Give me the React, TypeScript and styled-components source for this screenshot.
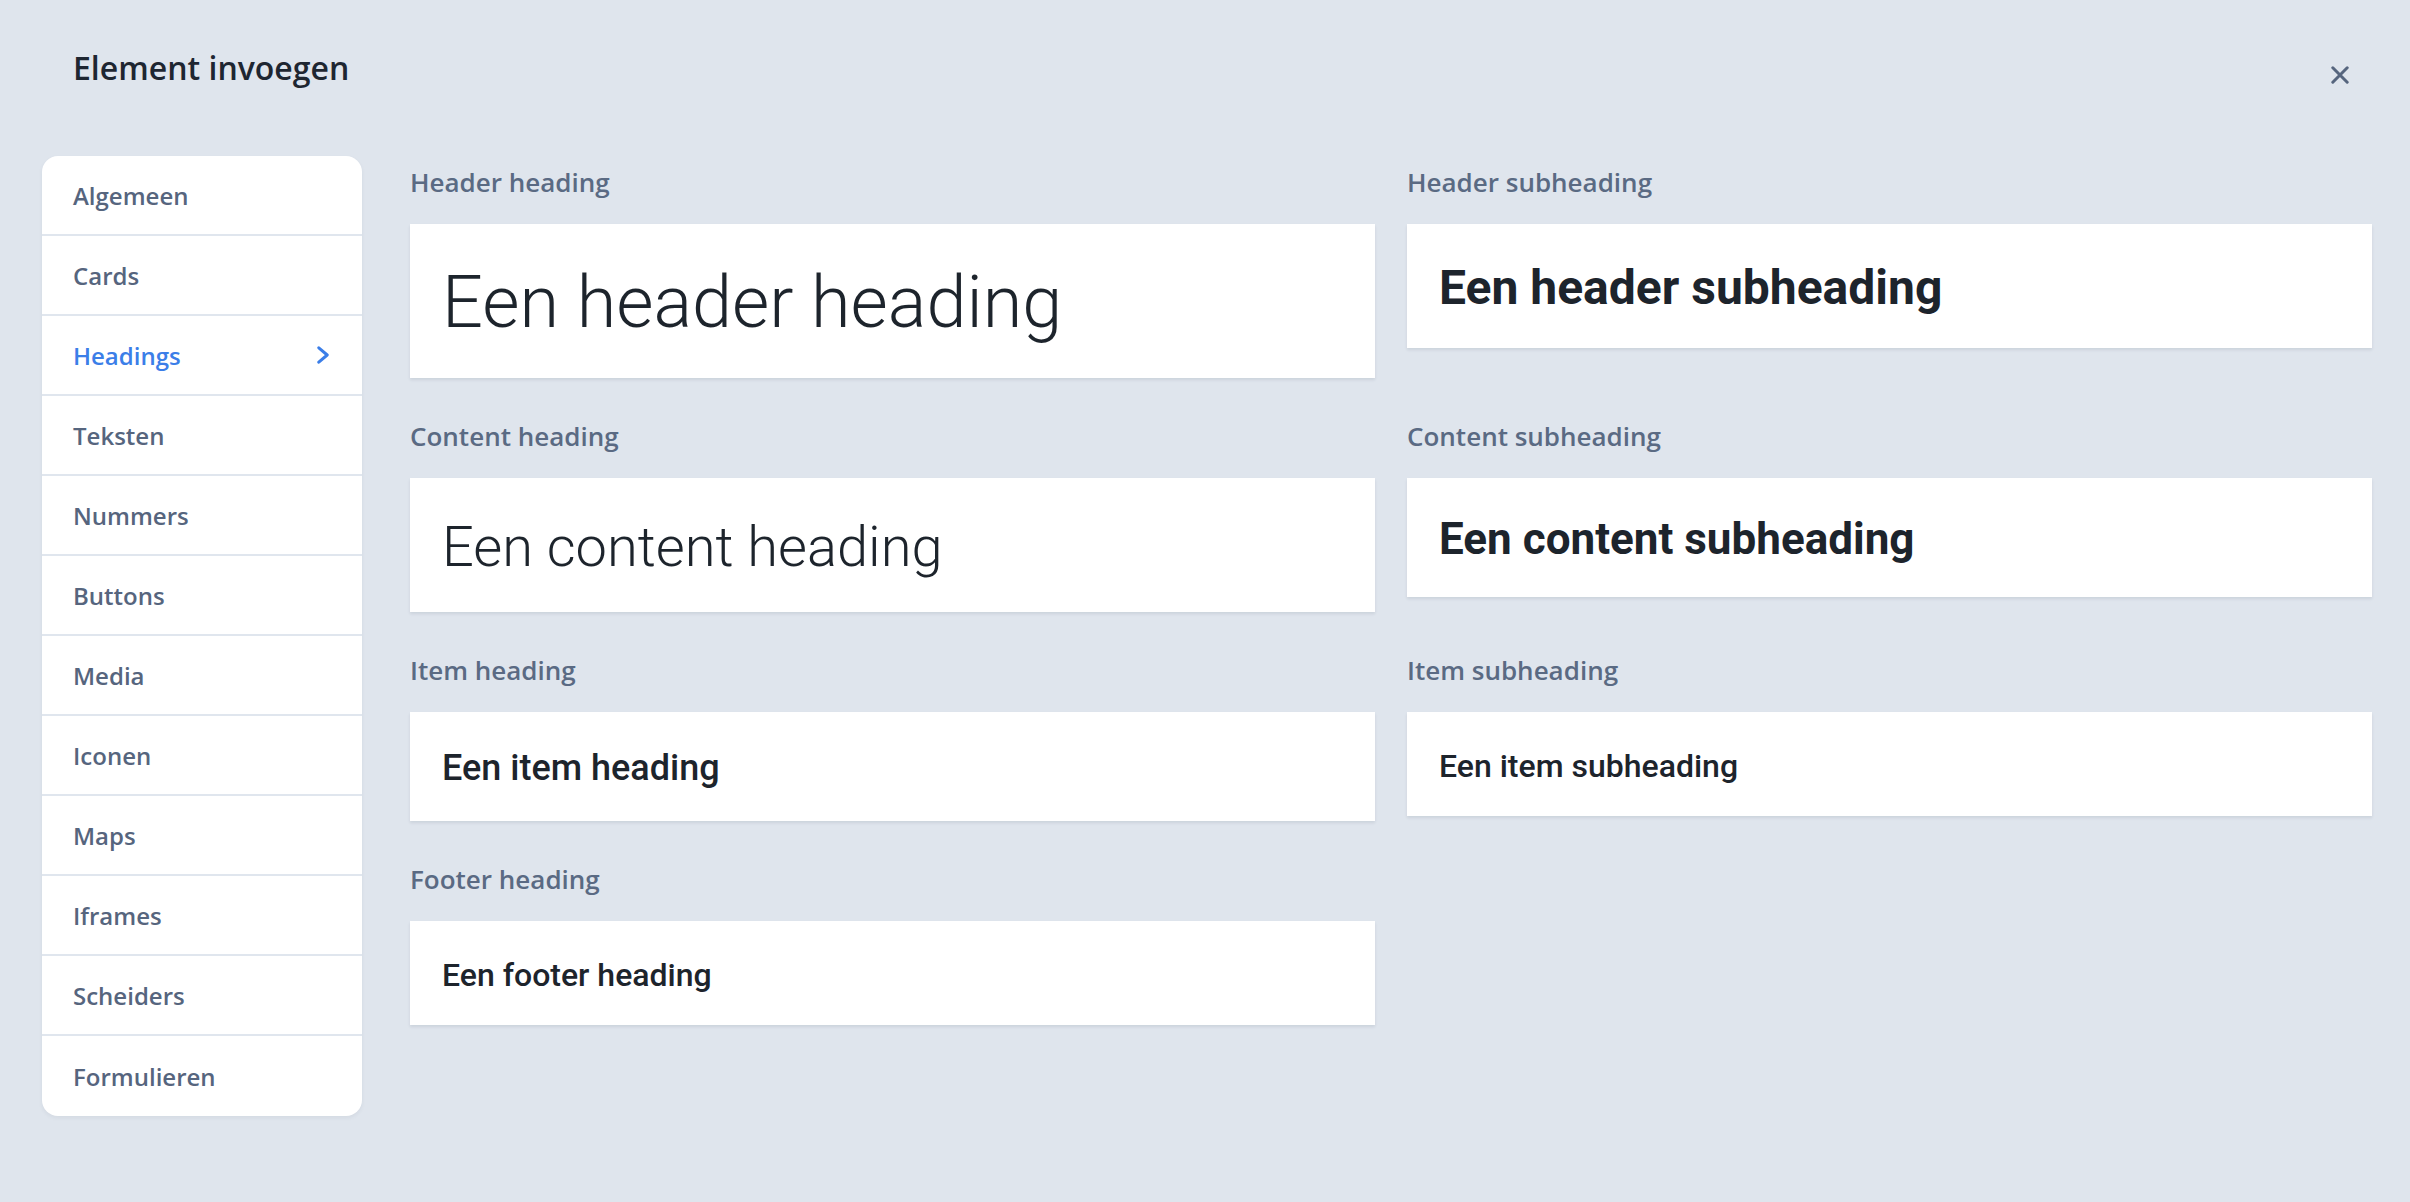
import React from "react";
import styled, { createGlobalStyle } from "styled-components";

const GlobalStyle = createGlobalStyle`
  html, body {
    margin: 0;
    padding: 0;
    background: #dfe5ed;
  }
  * {
    box-sizing: border-box;
  }
`;

const categories = [
  "Algemeen",
  "Cards",
  "Headings",
  "Teksten",
  "Nummers",
  "Buttons",
  "Media",
  "Iconen",
  "Maps",
  "Iframes",
  "Scheiders",
  "Formulieren",
];

type Sample = {
  label: string;
  text: string;
  size: number;
  weight: number;
};

const samples: Sample[] = [
  { label: "Header heading", text: "Een header heading", size: 72, weight: 300 },
  { label: "Header subheading", text: "Een header subheading", size: 48, weight: 700 },
  { label: "Content heading", text: "Een content heading", size: 56, weight: 300 },
  { label: "Content subheading", text: "Een content subheading", size: 44, weight: 700 },
  { label: "Item heading", text: "Een item heading", size: 36, weight: 500 },
  { label: "Item subheading", text: "Een item subheading", size: 32, weight: 500 },
  { label: "Footer heading", text: "Een footer heading", size: 32, weight: 500 },
];

const Modal = styled.div`
  min-height: 100vh;
  background: #dfe5ed;
  font-family: "Open Sans", "Liberation Sans", sans-serif;
`;

const Header = styled.header`
  display: flex;
  align-items: center;
  justify-content: space-between;
  height: 92px;
  padding: 44px 61px 0 73px;
`;

const Title = styled.h1`
  margin: 0;
  font-size: 32px;
  line-height: 48px;
  font-weight: 600;
  color: #1e2631;
`;

const CloseButton = styled.button`
  display: flex;
  align-items: center;
  justify-content: center;
  width: 18px;
  height: 18px;
  margin-top: 14px;
  padding: 0;
  border: 0;
  background: none;
  color: #56657e;
  cursor: pointer;
`;

const Body = styled.div`
  display: grid;
  grid-template-columns: 320px 1fr;
  column-gap: 48px;
  align-items: start;
  padding: 64px 38px 80px 42px;
`;

const Sidebar = styled.nav`
  display: flex;
  flex-direction: column;
  background: #ffffff;
  border-radius: 16px;
  overflow: hidden;
  box-shadow: 0 2px 4px rgba(30, 45, 70, 0.06);
`;

const NavItem = styled.a<{ $active?: boolean }>`
  display: flex;
  align-items: center;
  justify-content: space-between;
  height: 80px;
  padding: 0 33px 0 31px;
  border-bottom: 2px solid #e0e6ee;
  font-size: 24px;
  font-weight: 600;
  color: ${(p) => (p.$active ? "#3b7ee8" : "#56657e")};
  text-decoration: none;
  cursor: pointer;

  &:last-child {
    border-bottom: 0;
  }
`;

const Samples = styled.div`
  display: grid;
  grid-template-columns: 1fr 1fr;
  column-gap: 32px;
  row-gap: 40px;
  align-items: start;
  padding-top: 8px;
`;

const Block = styled.section`
  display: flex;
  flex-direction: column;
`;

const Label = styled.div`
  margin-bottom: 24px;
  font-size: 26px;
  line-height: 36px;
  font-weight: 600;
  color: #5a6a83;
`;

const Card = styled.div`
  padding: 34px 32px 30px;
  background: #ffffff;
  box-shadow: 0 2px 3px rgba(30, 45, 70, 0.1);
`;

const SampleText = styled.div<{ $size: number; $weight: number }>`
  font-family: Roboto, "Liberation Sans", sans-serif;
  font-size: ${(p) => p.$size}px;
  line-height: 1.25;
  font-weight: ${(p) => p.$weight};
  color: #1d242c;
  white-space: nowrap;
`;

const CloseIcon = () => (
  <svg width="18" height="18" viewBox="0 0 18 18" fill="none">
    <path
      d="M1.8 1.8L16.2 16.2M16.2 1.8L1.8 16.2"
      stroke="currentColor"
      strokeWidth="3"
      strokeLinecap="round"
    />
  </svg>
);

const Chevron = () => (
  <svg width="12" height="18" viewBox="0 0 12 18" fill="none">
    <path
      d="M1.8 1.8L10.2 9L1.8 16.2"
      stroke="currentColor"
      strokeWidth="3"
      strokeLinecap="round"
      strokeLinejoin="round"
    />
  </svg>
);

export default function App() {
  return (
    <Modal>
      <GlobalStyle />
      <Header>
        <Title>Element invoegen</Title>
        <CloseButton aria-label="Sluiten">
          <CloseIcon />
        </CloseButton>
      </Header>
      <Body>
        <Sidebar>
          {categories.map((name) => (
            <NavItem key={name} $active={name === "Headings"}>
              {name}
              {name === "Headings" && <Chevron />}
            </NavItem>
          ))}
        </Sidebar>
        <Samples>
          {samples.map((s) => (
            <Block key={s.label}>
              <Label>{s.label}</Label>
              <Card>
                <SampleText $size={s.size} $weight={s.weight}>
                  {s.text}
                </SampleText>
              </Card>
            </Block>
          ))}
        </Samples>
      </Body>
    </Modal>
  );
}
